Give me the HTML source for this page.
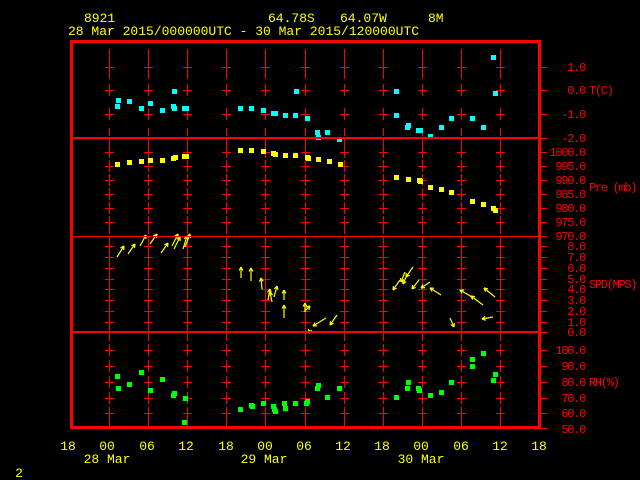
<!DOCTYPE html>
<html><head><meta charset="utf-8"><style>
html,body{margin:0;padding:0;background:#000;width:640px;height:480px;overflow:hidden}
svg{display:block}
text{font-family:"Liberation Mono",monospace;font-size:13px}
.y{fill:#ffff00}.r{fill:#ff0000}
.n text{font-size:12px;letter-spacing:-1.3px}
</style></head><body>
<svg id="s" width="640" height="480" xmlns="http://www.w3.org/2000/svg">
<g id="grid" fill="#ff0000"></g>
<g id="pts"></g>
<g id="arr" stroke="#ffff00" stroke-width="1.2" fill="none"></g>
<g fill="#ff0000">
<rect x="70" y="40" width="471" height="3"/>
<rect x="70" y="426" width="471" height="3"/>
<rect x="70" y="40" width="3" height="389"/>
<rect x="538" y="40" width="3" height="389"/>
<rect x="72" y="137" width="468" height="2"/>
<rect x="72" y="236" width="468" height="1"/>
<rect x="72" y="331" width="468" height="2"/>
</g>
<text class="y" x="84" y="22">8921</text>
<text class="y" x="268" y="22">64.78S</text>
<text class="y" x="340" y="22">64.07W</text>
<text class="y" x="428" y="22">8M</text>
<text class="y" x="68" y="35">28 Mar 2015/000000UTC - 30 Mar 2015/120000UTC</text>
<g class="r n" text-anchor="end">
<text x="585" y="71">1.0</text><text x="585" y="94">0.0</text><text x="585" y="118">-1.0</text><text x="585" y="142">-2.0</text>
<text x="585" y="156">1000.0</text><text x="585" y="170">995.0</text><text x="585" y="184">990.0</text><text x="585" y="198">985.0</text><text x="585" y="212">980.0</text><text x="585" y="226">975.0</text><text x="585" y="240">970.0</text>
<text x="585" y="250">8.0</text><text x="585" y="261">7.0</text><text x="585" y="272">6.0</text><text x="585" y="283">5.0</text><text x="585" y="293">4.0</text><text x="585" y="304">3.0</text><text x="585" y="315">2.0</text><text x="585" y="326">1.0</text><text x="585" y="336">0.0</text>
<text x="585" y="354">100.0</text><text x="585" y="370">90.0</text><text x="585" y="386">80.0</text><text x="585" y="402">70.0</text><text x="585" y="417">60.0</text><text x="585" y="433">50.0</text>
</g>
<g class="r n">
<text x="589" y="94">T(C)</text><text x="589" y="191">Pre (mb)</text><text x="589" y="288">SPD(MPS)</text><text x="589" y="386">RH(%)</text>
</g>
<g class="y" text-anchor="middle">
<text x="68" y="450">18</text><text x="107" y="450">00</text><text x="147" y="450">06</text><text x="186" y="450">12</text><text x="226" y="450">18</text><text x="265" y="450">00</text><text x="304" y="450">06</text><text x="343" y="450">12</text><text x="382" y="450">18</text><text x="421" y="450">00</text><text x="461" y="450">06</text><text x="500" y="450">12</text><text x="539" y="450">18</text>
<text x="107" y="463">28 Mar</text><text x="264" y="463">29 Mar</text><text x="421" y="463">30 Mar</text>
<text x="19" y="477">2</text>
</g>
</svg>
<script>
var NS="http://www.w3.org/2000/svg";
function el(p,t,a){var e=document.createElementNS(NS,t);for(var k in a)e.setAttribute(k,a[k]);p.appendChild(e);return e;}
var g=document.getElementById("grid");
function R(x,y,w,h){el(g,"rect",{x:x,y:y,width:w,height:h});}
var xs=[];for(var i=0;i<11;i++)xs.push(Math.round(109+39.1*i));
var ticks=[67,90,114,152,166,180,194,208,222,246,257,268,279,289,300,311,322,350,366,382,398,413];
var allT=[67,90,114,138,152,166,180,194,208,222,236,246,257,268,279,289,300,311,322,332,350,366,382,398,413,428];
xs.forEach(function(x){
 R(x,49,1,30);
 ticks.forEach(function(y){R(x,y-6,1,12);R(x-4,y,9,1);});
 [132,142,230,240,327,337,423].forEach(function(y){R(x,y-4,1,8);});
});
allT.forEach(function(y){R(541,y,6,1);});
var p=document.getElementById("pts");
function pts(arr,c){arr.forEach(function(a){el(p,"rect",{x:a[0]-2,y:a[1]-2,width:5,height:5,fill:c});});}
pts([[117,106],[118,100],[129,101],[141,108],[150,103],[162,110],[173,106],[174,108],[184,108],[186,108],[174,91],[240,108],[251,108],[263,110],[273,113],[275,113],[285,115],[295,115],[296,91],[307,118],[317,132],[318,137],[327,132],[339,139],[396,91],[396,115],[407,127],[408,125],[418,130],[420,130],[430,136],[441,127],[451,118],[472,118],[483,127],[493,57],[495,93]],"#00ffff");
pts([[117,164],[129,162],[141,161],[150,160],[162,160],[173,158],[175,157],[184,156],[186,156],[240,150],[251,150],[263,151],[273,153],[275,154],[285,155],[295,155],[307,157],[308,158],[318,159],[329,161],[340,164],[396,177],[408,179],[419,180],[420,181],[430,187],[441,189],[451,192],[472,201],[483,204],[493,208],[495,210]],"#ffff00");
pts([[117,376],[118,388],[129,384],[141,372],[150,390],[162,379],[173,395],[174,393],[185,398],[184,422],[240,409],[251,405],[252,406],[263,403],[273,406],[274,409],[275,411],[284,403],[285,408],[295,403],[306,403],[307,401],[317,388],[318,385],[327,397],[339,388],[396,397],[407,388],[408,382],[418,388],[419,390],[430,395],[441,392],[451,382],[472,366],[472,359],[483,353],[493,380],[495,374]],"#00ff00");
var A=document.getElementById("arr");
function arrow(x1,y1,x2,y2){
 el(A,"line",{x1:x1,y1:y1,x2:x2,y2:y2});
 var dx=x2-x1,dy=y2-y1,L=Math.sqrt(dx*dx+dy*dy);dx/=L;dy/=L;
 var h=4;
 [0.5,-0.5].forEach(function(a){
  var c=Math.cos(a),s=Math.sin(a);
  var rx=-(dx*c-dy*s)*h,ry=-(dx*s+dy*c)*h;
  el(A,"line",{x1:x2,y1:y2,x2:x2+rx,y2:y2+ry});
 });
}
[[117,257,124,246],[128,254,135,244],[140,246,146,235],[150,244,157,234],[161,253,168,243],[172,246,178,234],[174,249,180,237],[185,247,190,234],[183,249,187,236],
[241,278,241,267],[251,281,251,268],[262,289,261,278],[268,300,270,289],[272,302,270,292],[274,297,277,286],[284,300,284,290],[284,318,284,305],[305,312,305,303],[304,312,310,306],
[326,318,313,326],[337,315,330,325],[310,330,309,333],
[400,280,393,290],[405,272,401,282],[407,275,403,284],[413,267,406,277],[419,280,412,289],[430,282,421,288],[441,295,430,288],[472,297,460,290],[483,305,471,296],[495,297,484,288],[493,317,482,319],[450,318,454,327]].forEach(function(a){arrow(a[0],a[1],a[2],a[3]);});
</script>
</body></html>
